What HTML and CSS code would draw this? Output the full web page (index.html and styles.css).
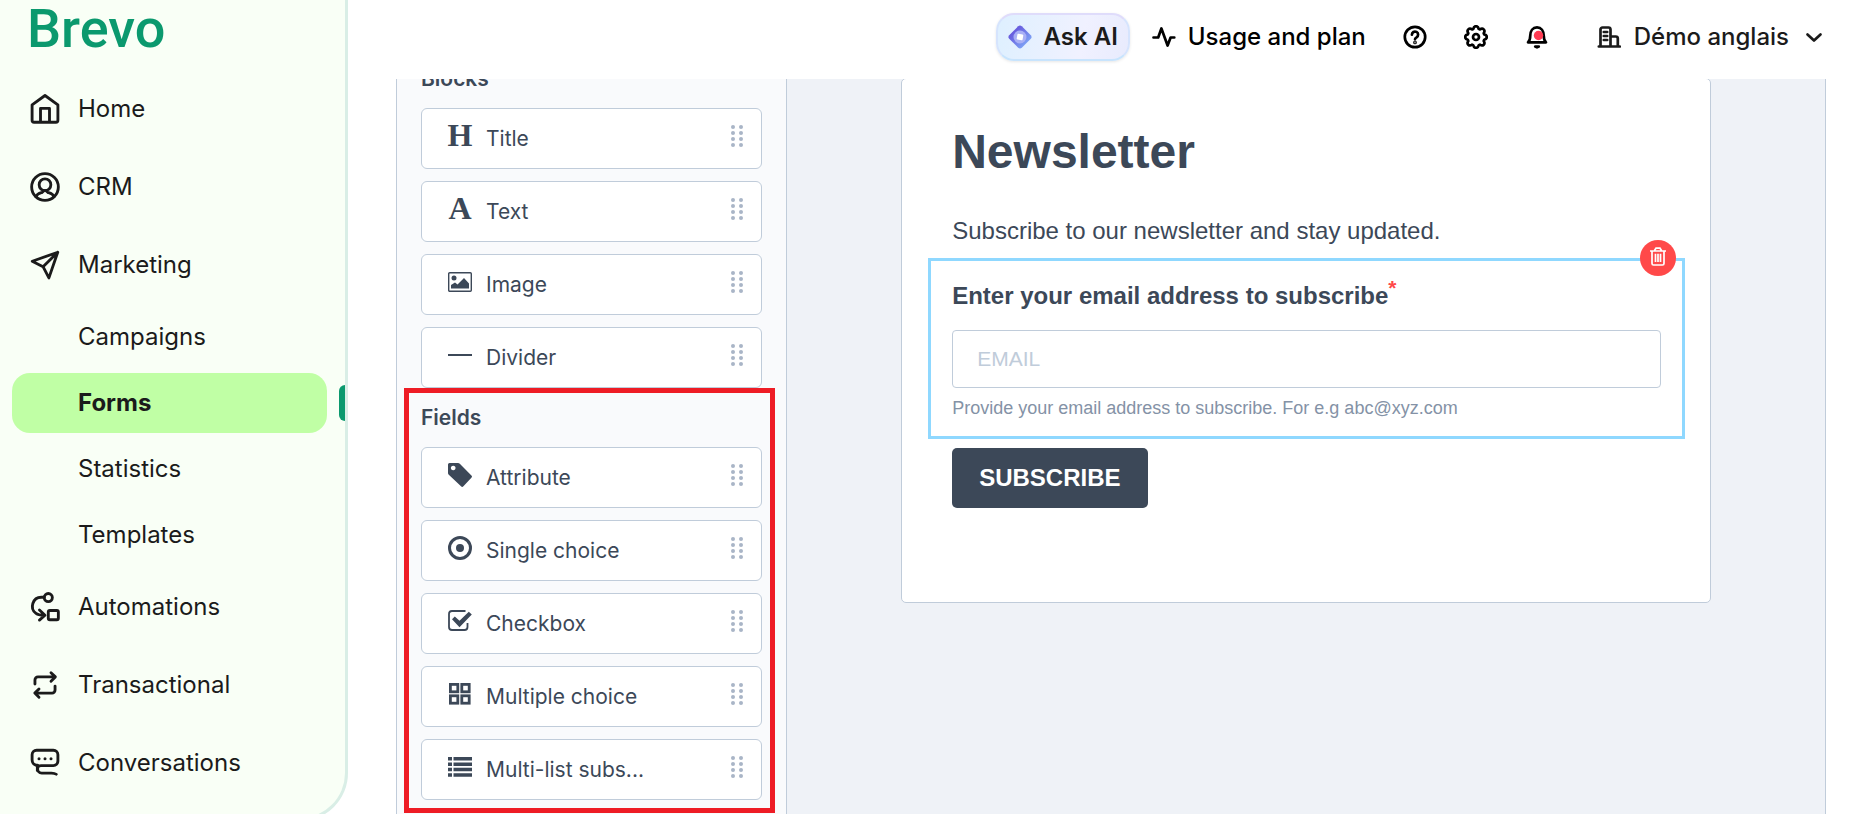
FILE: index.html
```html
<!DOCTYPE html>
<html lang="en">
<head>
<meta charset="utf-8">
<title>Brevo - Forms</title>
<link rel="stylesheet" href="styles.css">
</head>
<body>
<svg class="sprite" aria-hidden="true">
  <symbol id="grip" viewBox="0 0 12 24">
    <g fill="#a9b5c7">
      <circle cx="2" cy="3" r="2"/><circle cx="10" cy="3" r="2"/>
      <circle cx="2" cy="9" r="2"/><circle cx="10" cy="9" r="2"/>
      <circle cx="2" cy="15" r="2"/><circle cx="10" cy="15" r="2"/>
      <circle cx="2" cy="21" r="2"/><circle cx="10" cy="21" r="2"/>
    </g>
  </symbol>
</svg>
<div class="app">
  <aside class="sidebar">
    <a class="logo" href="#">Brevo</a>
    <nav class="nav">
      <a class="nav-item" href="#"><svg class="nav-icon" viewBox="0 0 24 24"><path d="M3.400 9.200 12 3l8.600 6.200V19.500a1.300 1.300 0 0 1-1.300 1.300H4.700a1.300 1.300 0 0 1-1.300-1.300zM9 20.800V11.600h6v9.200"/></svg>Home</a>
      <a class="nav-item" href="#"><svg class="nav-icon" viewBox="0 0 24 24"><circle cx="12" cy="12" r="8.900"/><circle cx="12" cy="10.500" r="3.900"/><path d="M6 18.500c.7-2 2.300-2.300 4-2.800.9-.3 1.200-.8 1.200-1.500M18 18.500c-.7-2-2.300-2.300-4-2.800-.9-.3-1.200-.8-1.200-1.500"/></svg>CRM</a>
      <a class="nav-item" href="#"><svg class="nav-icon" viewBox="0 0 24 24"><path d="M20.500 3.500 3.500 9.500l7.200 3.600 3.900 7.500zM20.500 3.500l-9.800 9.600"/></svg>Marketing</a>
      <div class="subnav">
        <a class="nav-item" href="#">Campaigns</a>
        <a class="nav-item active" href="#">Forms</a>
        <a class="nav-item" href="#">Statistics</a>
        <a class="nav-item" href="#">Templates</a>
      </div>
      <a class="nav-item" href="#"><svg class="nav-icon" viewBox="0 0 24 24"><circle cx="14.200" cy="5.700" r="2.700"/><rect x="14.200" y="14.300" width="6.700" height="6.200" rx="1"/><path d="M11.500 5.500H9.500a6 6 0 0 0-3.500 10.800c1.200.9 3 1.300 5.800 1.200M8.300 14l3.700 3.500-3.700 3.200"/></svg>Automations</a>
      <a class="nav-item" href="#"><svg class="nav-icon" viewBox="0 0 24 24"><path d="M5.300 11.300V8.600a2 2 0 0 1 2-2h11.500M16 3.800l2.900 2.800L16 9.500M18.700 12.700v2.700a2 2 0 0 1-2 2H5.300M8 14.600l-2.800 2.800L8 20.200"/></svg>Transactional</a>
      <a class="nav-item" href="#"><svg class="nav-icon" viewBox="0 0 24 24"><path d="M7.500 13.700C5 13.700 3.400 12 3.400 9.800V6.500a3 3 0 0 1 3-3h11.200a3 3 0 0 1 3 3v4.200a3 3 0 0 1-3 3H9.500c-1.600 0-2.400.7-2.400 1.900v.4c0 1.500 1 2.700 2.700 2.700h6.500c1.500 0 2.300.1 3.200.8"/><path d="M6.900 13.500v3.500"/><g class="dots"><circle cx="8" cy="9.200" r="1"/><circle cx="12" cy="9.200" r="1"/><circle cx="16" cy="9.200" r="1"/></g></svg>Conversations</a>
    </nav>
  </aside>

  <div class="main">
    <header class="topbar">
      <button class="ask-ai" type="button">
        <svg class="icon" viewBox="0 0 24 24"><defs><linearGradient id="gem" x1="0" y1="0" x2="1" y2="1"><stop offset=".2" stop-color="#6656dc"/><stop offset=".8" stop-color="#7da2f5"/></linearGradient></defs><path fill="url(#gem)" d="M10.200 1.200q1.800-1.600 3.600 0L22.800 10.200q1.600 1.800 0 3.600L13.800 22.800q-1.800 1.600-3.600 0L1.200 13.800q-1.600-1.800 0-3.600z"/><circle cx="12" cy="12" r="6.500" fill="#a9b0f5"/><rect x="9" y="9" width="6" height="6" rx="1" fill="#fff" transform="rotate(10 12 12)"/></svg>
        Ask AI
      </button>
      <button class="usage" type="button"><svg class="icon" viewBox="0 0 24 24"><path d="M1.500 12.500h4.700L9.400 3.500l6.200 17 3-8h3.700"/></svg>Usage and plan</button>
      <div class="tools">
        <button type="button" aria-label="Help"><svg class="icon" viewBox="0 0 24 24"><circle cx="12" cy="12" r="10.200"/><path d="M8.900 9.700a3.100 3.100 0 1 1 4.700 2.600c-1 .6-1.600 1-1.600 1.900"/><circle class="solid" cx="12" cy="17.400" r=".5"/></svg></button>
        <button type="button" aria-label="Settings"><svg class="icon" viewBox="0 0 24 24"><path d="M9.300 3.900C9.700 2 10.500 1.200 12 1.200s2.300.8 2.700 2.700c.3.200.9.400 1.200.5 1.600-1.100 2.700-1.100 3.800 0s1.100 2.200 0 3.800l.5 1.200c1.900.4 2.600 1.200 2.600 2.600s-.7 2.300-2.600 2.700l-.5 1.200c1.100 1.600 1.100 2.700 0 3.800s-2.200 1.100-3.800 0l-1.200.5c-.4 1.900-1.200 2.600-2.700 2.600s-2.300-.7-2.700-2.600l-1.200-.5c-1.600 1.100-2.700 1.100-3.800 0s-1.100-2.200 0-3.800l-.5-1.200c-1.900-.4-2.600-1.200-2.600-2.700s.7-2.200 2.600-2.600l.5-1.200c-1.100-1.600-1.100-2.700 0-3.800s2.200-1.100 3.800 0z"/><circle cx="12" cy="12" r="3"/></svg></button>
        <button type="button" aria-label="Notifications"><svg class="icon" viewBox="0 0 24 24"><path d="M3 17.300c1.700-1.300 2.200-3 2.200-6.300 0-5.200 2.600-8.700 6.800-8.700s6.800 3.500 6.800 8.700c0 3.300.5 5 2.200 6.300z"/><path class="solid" d="M10.200 21.500h3.600L12 22.300z"/><circle cx="13.500" cy="10.500" r="4.700" fill="#ff3b53" stroke="none"/></svg></button>
      </div>
      <button class="account" type="button">
        <svg class="icon" viewBox="0 0 24 24"><path d="M1.800 21.500h21M3.500 21V4.500a2 2 0 0 1 2-2h6a2 2 0 0 1 2 2V21M13.500 11.500h5.300a2 2 0 0 1 2 2V21M6.800 7h3.400M6.800 11h3.400M6.800 15h3.400"/></svg>
        Démo anglais
        <svg class="icon" viewBox="0 0 24 24"><path d="m5.500 9.500 6.500 6 6.500-6"/></svg>
      </button>
    </header>

    <div class="viewport">
      <div class="workspace">
        <section class="panel">
          <div class="group">
            <h2>Blocks</h2>
            <ul>
              <li class="block"><span class="glyph letter" aria-hidden="true">H</span><span class="name">Title</span><svg class="grip"><use href="#grip"/></svg></li>
              <li class="block"><span class="glyph letter" aria-hidden="true">A</span><span class="name">Text</span><svg class="grip"><use href="#grip"/></svg></li>
              <li class="block"><svg class="glyph" viewBox="0 0 24 24"><rect x=".7" y="2.700" width="22.600" height="18.600" rx="1" fill="none" stroke="currentColor" stroke-width="1.400"/><circle cx="6" cy="8" r="2.500"/><path d="M3 18.500v-3.500l4-2.500 2.500 2L16 8l5 5.500v5z"/></svg><span class="name">Image</span><svg class="grip"><use href="#grip"/></svg></li>
              <li class="block"><svg class="glyph" viewBox="0 0 24 24"><path d="M0 11h24v2H0z"/></svg><span class="name">Divider</span><svg class="grip"><use href="#grip"/></svg></li>
            </ul>
          </div>
          <div class="group highlighted">
            <h2>Fields</h2>
            <ul>
              <li class="block"><svg class="glyph" viewBox="0 0 24 24"><path fill-rule="evenodd" d="M1.500 0H10q1 0 1.800.8L23.400 12.400q1.200 1.200 0 2.400l-8 8.500q-1.200 1.200-2.400 0L.8 11.800Q0 11 0 10V1.500Q0 0 1.500 0zM5.200 2.700a2.300 2.300 0 1 0 .01 0z"/></svg><span class="name">Attribute</span><svg class="grip"><use href="#grip"/></svg></li>
              <li class="block"><svg class="glyph" viewBox="0 0 24 24"><circle cx="12" cy="12" r="10.500" fill="none" stroke="currentColor" stroke-width="3"/><circle cx="12" cy="12" r="4"/></svg><span class="name">Single choice</span><svg class="grip"><use href="#grip"/></svg></li>
              <li class="block"><svg class="glyph" viewBox="0 0 24 24"><path fill="none" stroke="currentColor" stroke-width="1.800" d="M17.500 2H4a3 3 0 0 0-3 3v13a3 3 0 0 0 3 3h12.500a3 3 0 0 0 3-3v-4"/><path d="m4 10.300 2.800-2.700 4.700 4.200 9.300-9 3 2.800L11.500 18.300z"/></svg><span class="name">Checkbox</span><svg class="grip"><use href="#grip"/></svg></li>
              <li class="block"><svg class="glyph" viewBox="0 0 24 24"><g fill="none" stroke="currentColor" stroke-width="2.800"><rect x="2.400" y="2.400" width="7.400" height="7.400"/><rect x="13.800" y="2.400" width="7.400" height="7.400"/><rect x="2.400" y="13.800" width="7.400" height="7.400"/><rect x="13.800" y="13.800" width="7.400" height="7.400"/></g></svg><span class="name">Multiple choice</span><svg class="grip"><use href="#grip"/></svg></li>
              <li class="block"><svg class="glyph" viewBox="0 0 24 24"><path d="M0 2h4v3.500H0zM5.500 2H24v3.500H5.500zM0 7.400h4v3.500H0zM5.500 7.400H24v3.500H5.500zM0 12.800h4v3.500H0zM5.500 12.800H24v3.500H5.500zM0 18.200h4v3.500H0zM5.500 18.200H24v3.500H5.500z"/></svg><span class="name">Multi-list subs...</span><svg class="grip"><use href="#grip"/></svg></li>
            </ul>
          </div>
        </section>

        <section class="canvas">
          <form class="card">
            <h1>Newsletter</h1>
            <p class="intro">Subscribe to our newsletter and stay updated.</p>
            <div class="selected">
              <button class="delete" type="button" aria-label="Delete"><svg viewBox="0 0 18 20"><path d="M1 4h16M5.500 3.500 7 1.200h4l1.500 2.300M3 4v12.500q0 1.500 1.500 1.500h9q1.500 0 1.500-1.500V4M6.500 6.800v8.200M9 6.800v8.200M11.500 6.800v8.200"/></svg></button>
              <label for="email">Enter your email address to subscribe<sup>*</sup></label>
              <input id="email" type="email" placeholder="EMAIL">
              <p class="help">Provide your email address to subscribe. For e.g abc@xyz.com</p>
            </div>
            <button class="subscribe" type="button">SUBSCRIBE</button>
          </form>
        </section>
      </div>
    </div>
  </div>
</div>
</body>
</html>
```

FILE: styles.css
```css
* { box-sizing: border-box; }

body {
  margin: 0;
  background: #fff;
  color: #1b1b1b;
  font-family: Inter, "Liberation Sans", sans-serif;
  font-size: 24px;
  line-height: 30px;
  overflow: hidden;
}

h1, h2, p, ul { margin: 0; padding: 0; }
ul { list-style: none; }
a { color: inherit; text-decoration: none; }
button { margin: 0; padding: 0; border: 0; background: none; color: inherit; font: inherit; cursor: pointer; }
svg { display: block; flex: none; }
.sprite { position: absolute; width: 0; height: 0; }

.app { display: flex; height: 100vh; }

/* Sidebar */
.sidebar {
  flex: none;
  width: 348px;
  height: calc(100vh + 7px);
  border-right: 3px solid #d9eee6;
  border-bottom: 3px solid #d9eee6;
  border-bottom-right-radius: 48px;
  background: #f9fff6;
}
.logo {
  display: block;
  height: 79px;
  padding-left: 27px;
  color: #0b996e;
  font-family: Roboto, sans-serif;
  font-size: 54px;
  font-weight: 500;
  line-height: 58px;
}
.nav { display: flex; flex-direction: column; gap: 18px; padding: 0 18px 0 12px; }
.nav-item {
  position: relative;
  display: flex;
  align-items: center;
  gap: 15px;
  height: 60px;
  padding-left: 15px;
  border-radius: 18px;
}
.nav-icon { width: 36px; height: 36px; fill: none; stroke: currentColor; stroke-width: 1.9; stroke-linecap: round; stroke-linejoin: round; }
.nav-icon .dots { fill: currentColor; stroke: none; }
.subnav { display: flex; flex-direction: column; gap: 6px; margin: -6px 0; }
.subnav .nav-item { padding-left: 66px; }
.nav-item.active { background: #c0ffa5; font-weight: 700; }
.nav-item.active::after {
  content: "";
  position: absolute;
  top: 12px;
  right: -18px;
  width: 6px;
  height: 36px;
  border-radius: 6px 0 0 6px;
  background: #0b996e;
}

/* Top bar */
.main { flex: 1; min-width: 0; display: flex; flex-direction: column; }
.topbar {
  flex: none;
  display: flex;
  align-items: center;
  justify-content: flex-end;
  height: 79px;
  padding: 0 24px 5px 0;
  color: #000;
  font-weight: 500;
}
.topbar button { display: flex; align-items: center; gap: 12px; }
.icon { width: 24px; height: 24px; fill: none; stroke: currentColor; stroke-width: 2.7; stroke-linecap: round; stroke-linejoin: round; }
.icon .solid { fill: currentColor; }
.ask-ai .icon { stroke: none; }
.topbar .ask-ai {
  height: 48px;
  margin-right: 22px;
  padding: 0 10px;
  border: 2px solid #d6e4fd;
  border-top-color: #dfdcfb;
  border-bottom-color: #c8e4fd;
  border-radius: 18px;
  background: linear-gradient(100deg, #def0ff, #f0f1ff 65%, #e8ebfd);
  box-shadow: 0 1px 3px #0000001a;
  color: #1b1b1b;
  font-weight: 600;
}
.tools { display: flex; gap: 37px; margin: 0 48px 0 37px; }
.topbar .account { gap: 13px; color: #1b1b1b; }

/* Editor: the area is scrolled down a little below the top bar */
.viewport { flex: 1; min-height: 0; overflow: hidden; padding: 0 24px 0 48px; }
.workspace { display: flex; min-height: calc(100% + 30px); margin-top: -30px; border: solid #c0ccda; border-width: 0 1px; }
.panel {
  flex: none;
  width: 390px;
  padding: 0 24px;
  border-right: 1px solid #c0ccda;
  background: #f9fafc;
  color: #3c4858;
}
.panel h2 { font-size: 21px; font-weight: 600; line-height: 59px; }
.panel ul { display: flex; flex-direction: column; gap: 12px; }
.block {
  display: flex;
  align-items: center;
  height: 61px;
  padding: 0 18px 0 26px;
  border: 1px solid #c0ccda;
  border-radius: 6px;
  background: #fff;
  font-size: 21px;
}
.glyph { width: 24px; height: 24px; margin-bottom: 5px; fill: currentColor; }
.letter { display: flex; justify-content: center; font-family: "Liberation Serif", serif; font-size: 32px; font-weight: 700; line-height: 22px; }
.name { flex: 1; margin-left: 14px; }
.grip { width: 12px; height: 24px; margin-bottom: 5px; }
.highlighted { position: relative; }
.highlighted::after {
  content: "";
  position: absolute;
  inset: 0 -13px -13px -17px;
  border: 5px solid #ee1c25;
  pointer-events: none;
}

/* Form preview */
.canvas { flex: 1; min-width: 0; padding-top: 29px; background: #eff2f7; color: #3c4858; font-family: "Liberation Sans", Arial, sans-serif; }
.card { width: 78%; margin: 0 auto; padding: 43px 49px 94px 50px; border: 1px solid #c0ccda; border-radius: 5px; background: #fff; }
.card h1 { font-size: 48px; line-height: 60px; }
.intro { margin-top: 34px; }
.selected { position: relative; margin: 12px -24px 9px; padding: 17px 21px 16px; border: 3px solid #8fd8ff; }
.selected label { display: block; font-weight: 700; line-height: 36px; }
.selected sup { color: #ff4949; font-size: 21px; line-height: 0; }
.selected input {
  display: block;
  width: 100%;
  height: 58px;
  margin: 16px 0 8px;
  padding: 0 24px;
  border: 1px solid #c0ccda;
  border-radius: 4px;
  background: #fff;
  color: inherit;
  font: inherit;
  font-size: 21px;
}
.selected input::placeholder { color: #c0ccda; opacity: 1; }
.help { color: #8492a6; font-size: 18px; line-height: 24px; }
.delete {
  position: absolute;
  top: -21px;
  right: 6px;
  display: flex;
  justify-content: center;
  width: 36px;
  height: 36px;
}
.selected .delete { padding-top: 7px; border-radius: 50%; background: #ff4949; }
.delete svg { width: 18px; height: 20px; fill: none; stroke: #fff; stroke-width: 1.7; }
.subscribe { height: 60px; }
.card .subscribe { padding: 0 27px; border-radius: 5px; background: #3c4858; color: #fff; font-weight: 700; }
```
